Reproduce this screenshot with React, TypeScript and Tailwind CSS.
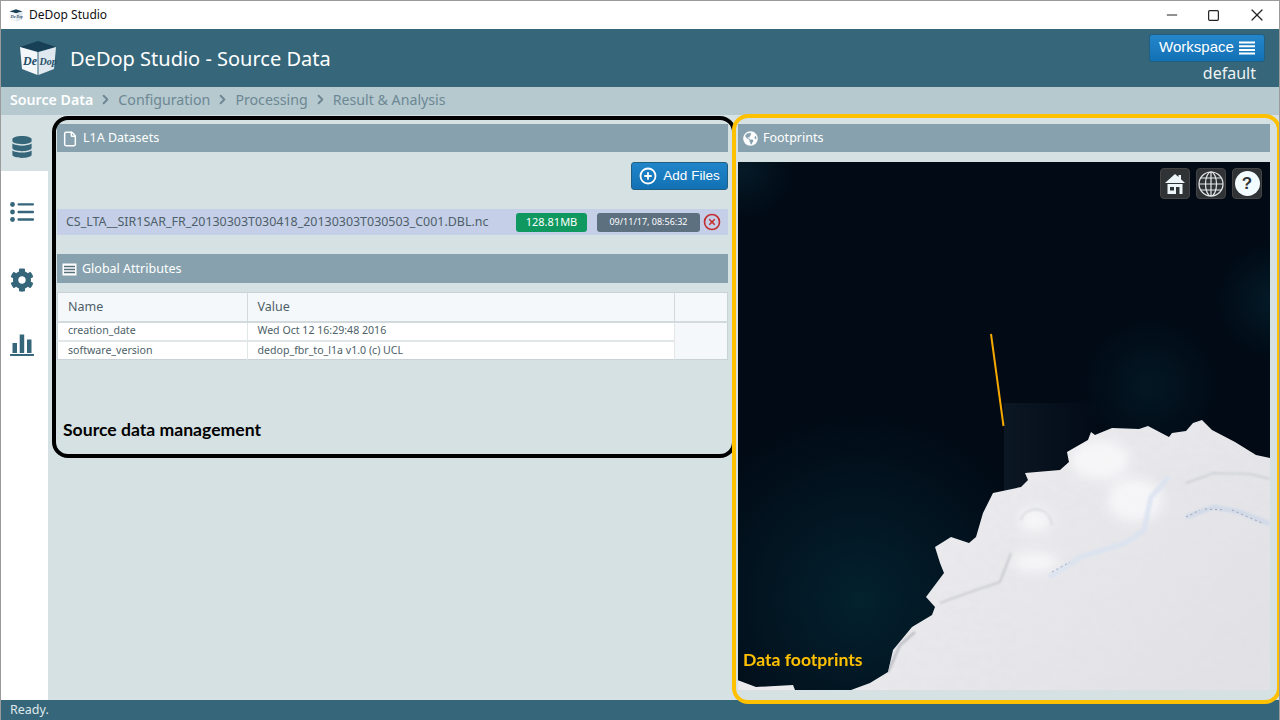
import React from "react";
import { FaDatabase, FaCog, FaGlobeAmericas } from "react-icons/fa";
import { ChevronRight, CirclePlus, CircleX, File, Minus, Square, X } from "lucide-react";

const UI = "font-['Noto_Sans','Open_Sans',sans-serif]";

const Logo = ({ className }: { className: string }) => (
  <svg viewBox="0 0 38 34" className={className}>
    <path d="M1 6 L19 0 L37 6 L19 11 Z" fill="#173f55" />
    <path d="M1 6 L18.5 11 L18.5 34 L3 28 Z" fill="#f4f7f9" />
    <path d="M37 6 L19.5 11 L19.5 34 L35 28 Z" fill="#dfe8ee" />
    <text x="4" y="24" fontSize="12" fontStyle="italic" fontWeight="700" fontFamily="Liberation Serif, serif" fill="#1f4f69">
      De
    </text>
    <text x="20.5" y="24" fontSize="10" fontStyle="italic" fontWeight="700" fontFamily="Liberation Serif, serif" fill="#1f4f69">
      Dop
    </text>
  </svg>
);

const PanelHeader = ({ icon, title, height }: { icon: React.ReactNode; title: string; height: string }) => (
  <div className={`${height} bg-[#87a2ae] flex items-center pl-[5px] pt-[1px] gap-[5px] text-[12.5px] text-white shrink-0`}>
    {icon}
    <span>{title}</span>
  </div>
);

const Hamburger = () => (
  <svg width="16" height="14" viewBox="0 0 16 14" fill="none" stroke="white" strokeWidth="2">
    <path d="M0 1.5H16M0 5.2H16M0 8.9H16M0 12.6H16" />
  </svg>
);

const ListIcon = () => (
  <svg width="24" height="20" viewBox="0 0 24 20" fill="#36667a">
    <circle cx="2.5" cy="2.5" r="2.4" />
    <circle cx="2.5" cy="10" r="2.4" />
    <circle cx="2.5" cy="17.5" r="2.4" />
    <rect x="7.5" y="1.2" width="16.5" height="2.4" rx="1" />
    <rect x="7.5" y="8.8" width="16.5" height="2.4" rx="1" />
    <rect x="7.5" y="16.3" width="16.5" height="2.4" rx="1" />
  </svg>
);

const ChartIcon = () => (
  <svg width="24" height="22" viewBox="0 0 24 22" fill="#36667a">
    <rect x="2.5" y="9" width="4.5" height="10" />
    <rect x="9.7" y="0.5" width="4.5" height="18.5" />
    <rect x="17" y="5.5" width="4.5" height="13.5" />
    <rect x="0" y="20" width="24" height="2" rx="0.5" />
  </svg>
);

const AttributesIcon = () => (
  <svg width="15" height="13" viewBox="0 0 15 13">
    <rect x="0.5" y="0.5" width="14" height="12" fill="white" />
    <path d="M2 3.5H13M2 6.5H13M2 9.5H13" stroke="#56707c" strokeWidth="1.5" />
  </svg>
);

const HomeIcon = () => (
  <svg width="20" height="21" viewBox="0 0 20 21" fill="#edf5f8">
    <path d="M10 1 L13.5 4 V2 H16 V6.2 L20 10 H0 Z" />
    <path fillRule="evenodd" d="M2.5 11 H17.5 V21 H2.5 Z M5 14 V17.5 H9 V14 Z M11 14 V21 H14.5 V14 Z" />
  </svg>
);

const WireGlobe = () => (
  <svg width="26" height="26" viewBox="0 0 26 26" fill="none" stroke="#e6e9ea" strokeWidth="1.2">
    <circle cx="13" cy="13" r="12" />
    <ellipse cx="13" cy="13" rx="5.5" ry="12" />
    <path d="M13 1V25M1 13H25M3 7H23M3 19H23" />
  </svg>
);

const MapButton = ({ children }: { children: React.ReactNode }) => (
  <div className="w-[30px] h-[31px] rounded-[4px] bg-[#303336] border border-[#444] flex items-center justify-center">
    {children}
  </div>
);

// satellite backdrop, coordinates are page pixels
const MapDrawing = () => (
  <svg viewBox="738 162 532 528" className="absolute inset-0 w-full h-full" preserveAspectRatio="none">
    <defs>
      <radialGradient id="teal1" gradientUnits="userSpaceOnUse" cx="860" cy="600" r="190">
        <stop offset="0" stopColor="#05303f" stopOpacity="0.6" />
        <stop offset="1" stopColor="#05303f" stopOpacity="0" />
      </radialGradient>
      <radialGradient id="teal2" gradientUnits="userSpaceOnUse" cx="1150" cy="385" r="70">
        <stop offset="0" stopColor="#06303f" stopOpacity="0.35" />
        <stop offset="1" stopColor="#06303f" stopOpacity="0" />
      </radialGradient>
      <radialGradient id="teal3" gradientUnits="userSpaceOnUse" cx="1275" cy="300" r="60">
        <stop offset="0" stopColor="#06303f" stopOpacity="0.45" />
        <stop offset="1" stopColor="#06303f" stopOpacity="0" />
      </radialGradient>
      <radialGradient id="teal4" gradientUnits="userSpaceOnUse" cx="745" cy="170" r="50">
        <stop offset="0" stopColor="#0a2c3c" stopOpacity="0.45" />
        <stop offset="1" stopColor="#0a2c3c" stopOpacity="0" />
      </radialGradient>
      <linearGradient id="tile" gradientUnits="userSpaceOnUse" x1="1004" y1="0" x2="1100" y2="0">
        <stop offset="0" stopColor="#0c1724" />
        <stop offset="1" stopColor="#0c1724" stopOpacity="0" />
      </linearGradient>
      <linearGradient id="ice" gradientUnits="userSpaceOnUse" x1="950" y1="430" x2="1200" y2="690">
        <stop offset="0" stopColor="#ededf0" />
        <stop offset="1" stopColor="#e2e2e6" />
      </linearGradient>
      <filter id="grain" x="0" y="0" width="100%" height="100%">
        <feTurbulence type="fractalNoise" baseFrequency="0.09 0.13" numOctaves="3" seed="7" />
        <feColorMatrix values="0 0 0 0 0.6  0 0 0 0 0.62  0 0 0 0 0.67  0.6 0 0 0 -0.2" />
      </filter>
      <filter id="soft">
        <feGaussianBlur stdDeviation="6" />
      </filter>
      <filter id="thin">
        <feGaussianBlur stdDeviation="1.2" />
      </filter>
      <clipPath id="iceClip">
        <path d="M1270 458 L1256 455 L1235 442 L1212 430 L1202 420 L1193 423 L1186 431 L1172 433 L1169 437 L1148 426 L1139 429 L1112 428 L1095 435 L1091 432 L1088 440 L1067 452 L1069 462 L1060 470 L1025 473 L1028 480 L1021 487 L993 493 L983 513 L976 537 L969 543 L951 537 L935 547 L940 563 L944 573 L926 597 L935 607 L932 615 L912 627 L893 650 L888 672 L870 683 L851 690 L1270 690 Z M737 680 L756 687 L775 686 L793 685 L795 690 L737 690 Z" />
      </clipPath>
    </defs>
    <rect x="738" y="162" width="532" height="528" fill="#010a15" />
    <rect x="1004" y="403" width="266" height="130" fill="url(#tile)" />
    <rect x="738" y="162" width="532" height="528" fill="url(#teal1)" />
    <rect x="738" y="162" width="532" height="528" fill="url(#teal2)" />
    <rect x="738" y="162" width="532" height="528" fill="url(#teal3)" />
    <rect x="738" y="162" width="532" height="528" fill="url(#teal4)" />
    <g clipPath="url(#iceClip)">
      <rect x="738" y="400" width="532" height="290" fill="url(#ice)" />
      <rect x="738" y="400" width="532" height="290" filter="url(#grain)" opacity="0.18" />
      <g filter="url(#soft)" fill="#f9f9fb" opacity="0.8">
        <ellipse cx="1100" cy="460" rx="30" ry="20" />
        <ellipse cx="1135" cy="500" rx="28" ry="22" />
        <ellipse cx="1035" cy="520" rx="16" ry="12" />
        <ellipse cx="1035" cy="562" rx="24" ry="10" />
      </g>
      <g filter="url(#thin)" fill="none">
        <path d="M1049 577 L1081 557 L1126 543 L1144 530 L1151 497 L1169 477" stroke="#d8e2f0" strokeWidth="5" opacity="0.8" />
        <path d="M1186 517 L1214 507 L1240 512 L1270 524" stroke="#cdd7e8" strokeWidth="5" opacity="0.8" />
        <path d="M1186 483 L1214 473 L1250 474 L1270 479" stroke="#c9ccd1" strokeWidth="2" opacity="0.8" />
        <path d="M940 603 L976 590 L1000 582 L1011 553" stroke="#b5b8be" strokeWidth="1.3" />
        <path d="M1021 520 C1025 505 1050 505 1052 525" stroke="#c2c5ca" strokeWidth="1" />
        <path d="M888 672 L900 645 L915 632" stroke="#b0b3b9" strokeWidth="2" />
      </g>
      <path d="M1052 572 L1070 562 M1186 517 L1200 510 M1205 509 L1225 510 M1232 510 L1262 523" stroke="#7f8ca3" strokeWidth="1" strokeDasharray="2 3" fill="none" opacity="0.7" />
    </g>
    <path d="M991 334 L1003.5 426" stroke="#f5a800" strokeWidth="2" />
  </svg>
);

const App = () => {
  return (
    <div className={`${UI} relative w-[1280px] h-[720px] overflow-hidden flex flex-col border-x border-t border-[#9b9b9b] bg-[#d6e1e3]`}>
      {/* window title bar */}
      <div className="h-[28px] shrink-0 bg-white flex items-center text-[12px] text-[#111]">
        <Logo className="w-[14px] h-[13px] ml-[8px] mr-[6px]" />
        <span>DeDop Studio</span>
        <div className="ml-auto flex items-center text-[#222]">
          <Minus size={16} strokeWidth={1.8} />
          <Square size={13} strokeWidth={2.2} className="ml-[27px]" />
          <X size={20} strokeWidth={1.44} className="ml-[27px] mr-[12px]" />
        </div>
      </div>

      {/* app header */}
      <div className="h-[58px] shrink-0 bg-[#36667a] flex items-center pl-[18px] pr-[14px]">
        <Logo className="w-[38px] h-[34px]" />
        <h1 className="ml-[13px] pt-[2px] text-[20px] text-white leading-none">DeDop Studio - Source Data</h1>
        <div className="ml-auto flex flex-col items-end pt-[1px]">
          <button className="w-[116px] h-[28px] rounded-[3px] bg-gradient-to-b from-[#2586cb] to-[#1271b5] border border-[#205f82] flex items-center justify-center gap-[5px] text-[15px] text-white font-['Liberation_Sans',sans-serif]">
            Workspace
            <Hamburger />
          </button>
          <span className="text-[16px] leading-[22px] text-[#eef3f5] pr-[9px]">default</span>
        </div>
      </div>

      {/* breadcrumb */}
      <div className="h-[28px] shrink-0 bg-[#b5c9cf] flex items-center pl-[9px] pb-[3px] text-[14.2px] text-[#6d8793]">
        <span className="text-white font-semibold">Source Data</span>
        <ChevronRight size={15} strokeWidth={3} className="mx-[5px]" />
        <span>Configuration</span>
        <ChevronRight size={15} strokeWidth={3} className="mx-[5px]" />
        <span>Processing</span>
        <ChevronRight size={15} strokeWidth={3} className="mx-[5px]" />
        <span>Result &amp; Analysis</span>
      </div>

      {/* body */}
      <div className="flex-1 flex min-h-0">
        <div className="w-[47px] shrink-0 flex flex-col">
          <div className="h-[56px] flex items-center justify-center pt-[8px] pr-[5px]">
            <FaDatabase size={22} color="#36667a" />
          </div>
          <div className="flex-1 bg-white flex flex-col items-center pt-[31px] pr-[5px]">
            <ListIcon />
            <div className="mt-[46px]">
              <FaCog size={24} color="#36667a" />
            </div>
            <div className="mt-[42px]">
              <ChartIcon />
            </div>
          </div>
        </div>

        <div className="flex-1 flex gap-[10px] pl-[9px] pr-[9px] pt-[9px] pb-[10px] min-w-0">
          {/* left panel */}
          <div className="w-[671px] flex flex-col">
            <PanelHeader height="h-[28px]" icon={<File size={16} color="white" strokeWidth={2.2} />} title="L1A Datasets" />
            <div className="flex justify-end mt-[10px]">
              <button className="w-[97px] h-[28px] rounded-[3px] bg-gradient-to-b from-[#2185c9] to-[#1271b5] border border-[#205f82] flex items-center justify-center gap-[6px] text-[13.5px] text-white font-['Liberation_Sans',sans-serif]">
                <CirclePlus size={18} strokeWidth={2.4} />
                Add Files
              </button>
            </div>
            <div className="mt-[19px] h-[26px] bg-[#c6cfe8] flex items-center pl-[9px] text-[12.44px] text-[#4d5f69]">
              <span className="w-[450px] whitespace-nowrap">CS_LTA__SIR1SAR_FR_20130303T030418_20130303T030503_C001.DBL.nc</span>
              <span className="w-[71px] h-[19px] rounded-[3px] bg-[#0f9960] text-white text-[11px] flex items-center justify-center">
                128.81MB
              </span>
              <span className="ml-[10px] w-[103px] h-[19px] rounded-[3px] bg-[#5c7080] text-white text-[9px] flex items-center justify-center">
                09/11/17, 08:56:32
              </span>
              <CircleX size={18} strokeWidth={2.2} color="#c23030" className="ml-[3px]" />
            </div>
            <div className="mt-[19px]">
              <PanelHeader height="h-[29px]" icon={<AttributesIcon />} title="Global Attributes" />
            </div>
            <table className="mt-[9px] w-full table-fixed border-collapse text-[#4d5f69] border border-[#c9d2d6]">
              <colgroup>
                <col className="w-[189.5px]" />
                <col className="w-[427px]" />
                <col />
              </colgroup>
              <thead>
                <tr className="h-[29px] bg-[#f5f8fa] text-[12.5px]">
                  <th className="font-normal text-left pl-[10px] pt-[2px] border-b-2 border-r border-[#d3dadd]">Name</th>
                  <th className="font-normal text-left pl-[10px] pt-[2px] border-b-2 border-r border-[#d3dadd]">Value</th>
                  <th className="border-b-2 border-[#d3dadd]"></th>
                </tr>
              </thead>
              <tbody className="text-[10.6px]">
                <tr className="h-[19px] bg-white">
                  <td className="pl-[10px] border-b-2 border-r border-[#e1e6e8]">creation_date</td>
                  <td className="pl-[10px] border-b-2 border-r border-[#e1e6e8]">Wed Oct 12 16:29:48 2016</td>
                  <td rowSpan={2} className="bg-[#f5f8fa]"></td>
                </tr>
                <tr className="h-[19px] bg-white">
                  <td className="pl-[10px] pt-[1px] border-r border-[#e1e6e8]">software_version</td>
                  <td className="pl-[10px] pt-[1px] border-r border-[#e1e6e8]">dedop_fbr_to_l1a v1.0 (c) UCL</td>
                </tr>
              </tbody>
            </table>
          </div>

          {/* right panel */}
          <div className="flex-1 flex flex-col min-w-0">
            <PanelHeader height="h-[28px]" icon={<FaGlobeAmericas size={15} color="white" />} title="Footprints" />
            <div className="relative mt-[10px] flex-1">
              <MapDrawing />
              <div className="absolute top-[6px] right-[8px] flex gap-[6px]">
                <MapButton>
                  <HomeIcon />
                </MapButton>
                <MapButton>
                  <WireGlobe />
                </MapButton>
                <MapButton>
                  <span className="w-[25px] h-[25px] rounded-full bg-[#f2fbfd] text-[#303336] text-[17px] font-bold leading-[25px] text-center font-['Liberation_Sans',sans-serif]">
                    ?
                  </span>
                </MapButton>
              </div>
            </div>
          </div>
        </div>
      </div>

      {/* status bar */}
      <div className="h-[20px] shrink-0 bg-[#36667a] flex items-center pl-[9px] text-[12.5px] text-[#dfe8eb]">Ready.</div>

      {/* screenshot annotations */}
      <div className="absolute left-[51px] top-[115px] w-[684px] h-[342px] rounded-[16px] border-[4px] border-black pointer-events-none"></div>
      <div className="absolute left-[731px] top-[113px] w-[549px] h-[590px] rounded-[16px] border-[4px] border-[#ffc000] pointer-events-none"></div>
      <span className="absolute left-[62px] top-[417px] text-[17.6px] leading-[24px] font-bold text-black font-['Lato',sans-serif]">
        Source data management
      </span>
      <span className="absolute left-[742px] top-[647px] text-[17.6px] leading-[24px] font-bold text-[#ffc000] font-['Lato',sans-serif]">
        Data footprints
      </span>
    </div>
  );
};

export default App;
